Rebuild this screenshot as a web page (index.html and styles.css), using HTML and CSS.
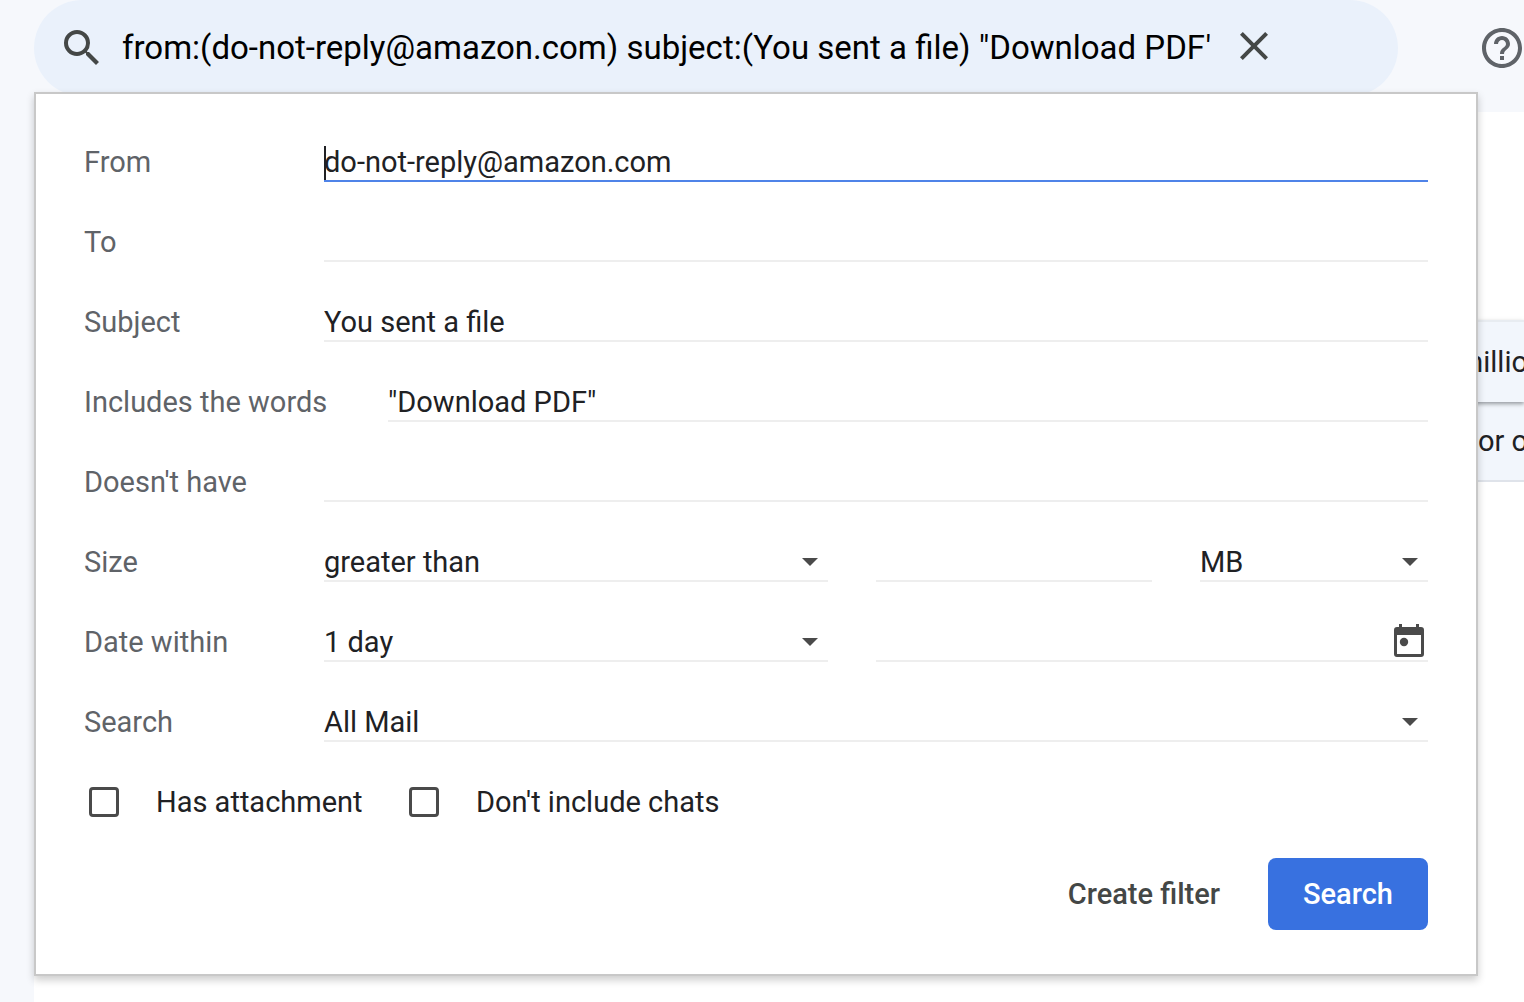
FILE: index.html
```html
<!DOCTYPE html>
<html lang="en">
<head>
<meta charset="utf-8">
<title>Mail search</title>
<link rel="stylesheet" href="styles.css">
</head>
<body>
<header class="topbar">
  <form class="searchbar" role="search">
    <button class="icon-button" type="submit" aria-label="Search mail">
      <svg class="icon" viewBox="0 0 24 24"><path d="M15.5 14h-.79l-.28-.27A6.471 6.471 0 0 0 16 9.5 6.5 6.5 0 1 0 9.5 16c1.61 0 3.09-.59 4.23-1.57l.27.28v.79l5 4.99L20.49 19l-4.99-5zm-6 0C7.01 14 5 11.99 5 9.5S7.01 5 9.5 5 14 7.01 14 9.5 11.99 14 9.5 14z"/></svg>
    </button>
    <input class="query" type="text" aria-label="Search mail" value="from:(do-not-reply@amazon.com) subject:(You sent a file) &quot;Download PDF&quot;">
    <button class="icon-button" type="reset" aria-label="Clear search">
      <svg class="icon" viewBox="0 0 24 24"><path d="M19 5.41 17.59 4 12 9.59 6.41 4 5 5.41 10.59 11 5 16.59 6.41 18 12 12.41 17.59 18 19 16.59 13.41 11z"/></svg>
    </button>
  </form>
  <button class="icon-button help" type="button" aria-label="Support">
    <svg class="icon" viewBox="0 0 24 24"><path d="M11 18h2v-2h-2v2zm1-16C6.48 2 2 6.48 2 12s4.48 10 10 10 10-4.48 10-10S17.52 2 12 2zm0 18c-4.41 0-8-3.59-8-8s3.59-8 8-8 8 3.59 8 8-3.59 8-8 8zm0-14c-2.21 0-4 1.79-4 4h2c0-1.1.9-2 2-2s2 .9 2 2c0 2-3 1.75-3 5h2c0-2.25 3-2.5 3-5 0-2.21-1.79-4-4-4z"/></svg>
  </button>
</header>

<main class="mailbox">
  <div class="mail mail--raised"><span class="mail-text">millio</span></div>
  <div class="mail"><span class="mail-text">or o</span></div>
</main>

<form class="panel">
  <div class="row">
    <label class="row-label" for="from">From</label>
    <div class="field field--focused"><input class="control" id="from" type="text" value="do-not-reply@amazon.com"></div>
  </div>
  <div class="row">
    <label class="row-label" for="to">To</label>
    <div class="field"><input class="control" id="to" type="text"></div>
  </div>
  <div class="row">
    <label class="row-label" for="subject">Subject</label>
    <div class="field"><input class="control" id="subject" type="text" value="You sent a file"></div>
  </div>
  <div class="row">
    <label class="row-label row-label--long" for="words">Includes the words</label>
    <div class="field"><input class="control" id="words" type="text" value="&quot;Download PDF&quot;"></div>
  </div>
  <div class="row">
    <label class="row-label" for="without">Doesn't have</label>
    <div class="field"><input class="control" id="without" type="text"></div>
  </div>
  <div class="row">
    <label class="row-label" for="size">Size</label>
    <div class="fields fields--size">
      <div class="field field--select"><select class="control" id="size"><option>greater than</option><option>less than</option></select></div>
      <div class="field"><input class="control" type="text" aria-label="Size value"></div>
      <div class="field field--select"><select class="control" aria-label="Size unit"><option>MB</option><option>KB</option><option>Bytes</option></select></div>
    </div>
  </div>
  <div class="row">
    <label class="row-label" for="within">Date within</label>
    <div class="fields fields--date">
      <div class="field field--select"><select class="control" id="within"><option>1 day</option><option>3 days</option><option>1 week</option></select></div>
      <div class="field">
        <input class="control" type="text" aria-label="Date">
        <button class="calendar-button" type="button" aria-label="Choose date">
          <svg class="calendar" viewBox="0 0 30 33"><path fill-rule="evenodd" d="M5 0h3v3h14V0h3v3h2a3 3 0 0 1 3 3v24a3 3 0 0 1-3 3H3a3 3 0 0 1-3-3V6a3 3 0 0 1 3-3h2zM3 11v19h24V11z"/><circle cx="10" cy="18" r="4.2"/></svg>
        </button>
      </div>
    </div>
  </div>
  <div class="row">
    <label class="row-label" for="scope">Search</label>
    <div class="field field--select"><select class="control" id="scope"><option>All Mail</option><option>Inbox</option></select></div>
  </div>
  <div class="checks">
    <label class="check"><input class="box" type="checkbox">Has attachment</label>
    <label class="check"><input class="box" type="checkbox">Don't include chats</label>
  </div>
  <div class="actions">
    <button class="link-button" type="button">Create filter</button>
    <button class="primary-button" type="submit">Search</button>
  </div>
</form>
</body>
</html>
```
FILE: styles.css
```css
* {
  box-sizing: border-box;
}

body {
  position: relative;
  min-height: 100vh;
  margin: 0;
  overflow-x: hidden;
  background: #f6f8fc;
  color: #202124;
  font: 29px/40px Roboto, "Noto Sans", sans-serif;
}

button,
input,
select {
  margin: 0;
  padding: 0;
  border: 0;
  background: none;
  color: inherit;
  font: inherit;
}

/* Top bar */
.topbar {
  display: flex;
  align-items: flex-start;
  gap: 80px;
  height: 112px;
  padding-left: 34px;
}

.searchbar {
  display: flex;
  flex: 1;
  align-items: center;
  min-width: 0;
  height: 96px;
  padding: 0 120px 0 24px;
  border-radius: 48px;
  background: #eaf1fb;
}

.icon-button {
  display: flex;
  flex: none;
  color: #444746;
}

.icon {
  width: 48px;
  height: 48px;
  fill: currentColor;
}

.query {
  flex: 1;
  min-width: 0;
  height: 48px;
  margin: 0 20px 0 16px;
  padding-bottom: 2px;
  color: #000;
  font-size: 33px;
}

.help {
  margin: 24px -2px 0 0;
  color: #5f6368;
}

/* Message list */
.mailbox {
  min-height: calc(100vh - 112px);
  margin-left: 34px;
  padding-top: 208px;
  overflow: hidden;
  background: #fff;
}

.mail {
  display: flex;
  align-items: center;
  justify-content: flex-end;
  height: 80px;
  border-bottom: 2px solid #dfe3ea;
  background: #f2f6fc;
}

.mail--raised {
  position: relative;
  height: 82px;
  border-top: 2px solid #e8ecf1;
  border-bottom: 0;
  box-shadow: 0 2px 4px rgba(60, 64, 67, 0.5);
}

.mail-text {
  margin-right: -4px;
}

/* Advanced search panel */
.panel {
  position: absolute;
  top: 92px;
  right: 46px;
  left: 34px;
  padding: 8px 48px 44px;
  border: 2px solid #c8c8c8;
  background: #fff;
  box-shadow: 0 4px 8px rgba(0, 0, 0, 0.2);
}

.row {
  display: flex;
  align-items: flex-end;
  height: 80px;
}

.row-label {
  flex: none;
  width: 240px;
  color: #5f6368;
}

.row-label--long {
  width: 304px;
}

.fields {
  display: grid;
  flex: 1;
  gap: 48px;
}

.fields--size {
  grid-template-columns: 504fr 276fr 228fr;
}

.fields--date {
  grid-template-columns: 504fr 552fr;
}

.field {
  position: relative;
  display: flex;
  flex: 1;
  align-items: center;
  min-width: 0;
  height: 40px;
  border-bottom: 2px solid #eee;
}

.field--focused {
  border-color: #4f83e8;
}

.field--focused::before {
  position: absolute;
  top: 4px;
  bottom: 0;
  left: 0;
  width: 2px;
  background: #202124;
  content: "";
}

.control {
  flex: 1;
  width: 100%;
  min-width: 0;
  height: 38px;
  outline: 0;
  appearance: none;
}

input.control {
  padding-top: 2px;
}

.field--select::after {
  position: absolute;
  top: 16px;
  right: 10px;
  width: 16px;
  height: 8px;
  background: #4a4a4a;
  clip-path: polygon(0 0, 100% 0, 50% 100%);
  content: "";
  pointer-events: none;
}

.calendar-button {
  display: flex;
  padding: 0 4px 2px 0;
}

.calendar {
  width: 30px;
  height: 33px;
  fill: #4a4a4a;
}

.checks {
  display: flex;
  padding-top: 40px;
}

.check {
  display: flex;
  align-items: center;
  min-width: 320px;
}

.box {
  width: 30px;
  height: 30px;
  margin: 0 37px 0 5px;
  border: 3px solid #4a4a4a;
  border-radius: 4px;
  appearance: none;
}

.actions {
  display: flex;
  justify-content: flex-end;
  gap: 48px;
  padding-top: 36px;
  font-weight: 500;
}

.link-button {
  color: #444746;
}

.primary-button {
  width: 160px;
  height: 72px;
  border-radius: 8px;
  background: #3871e0;
  color: #fff;
}
```
